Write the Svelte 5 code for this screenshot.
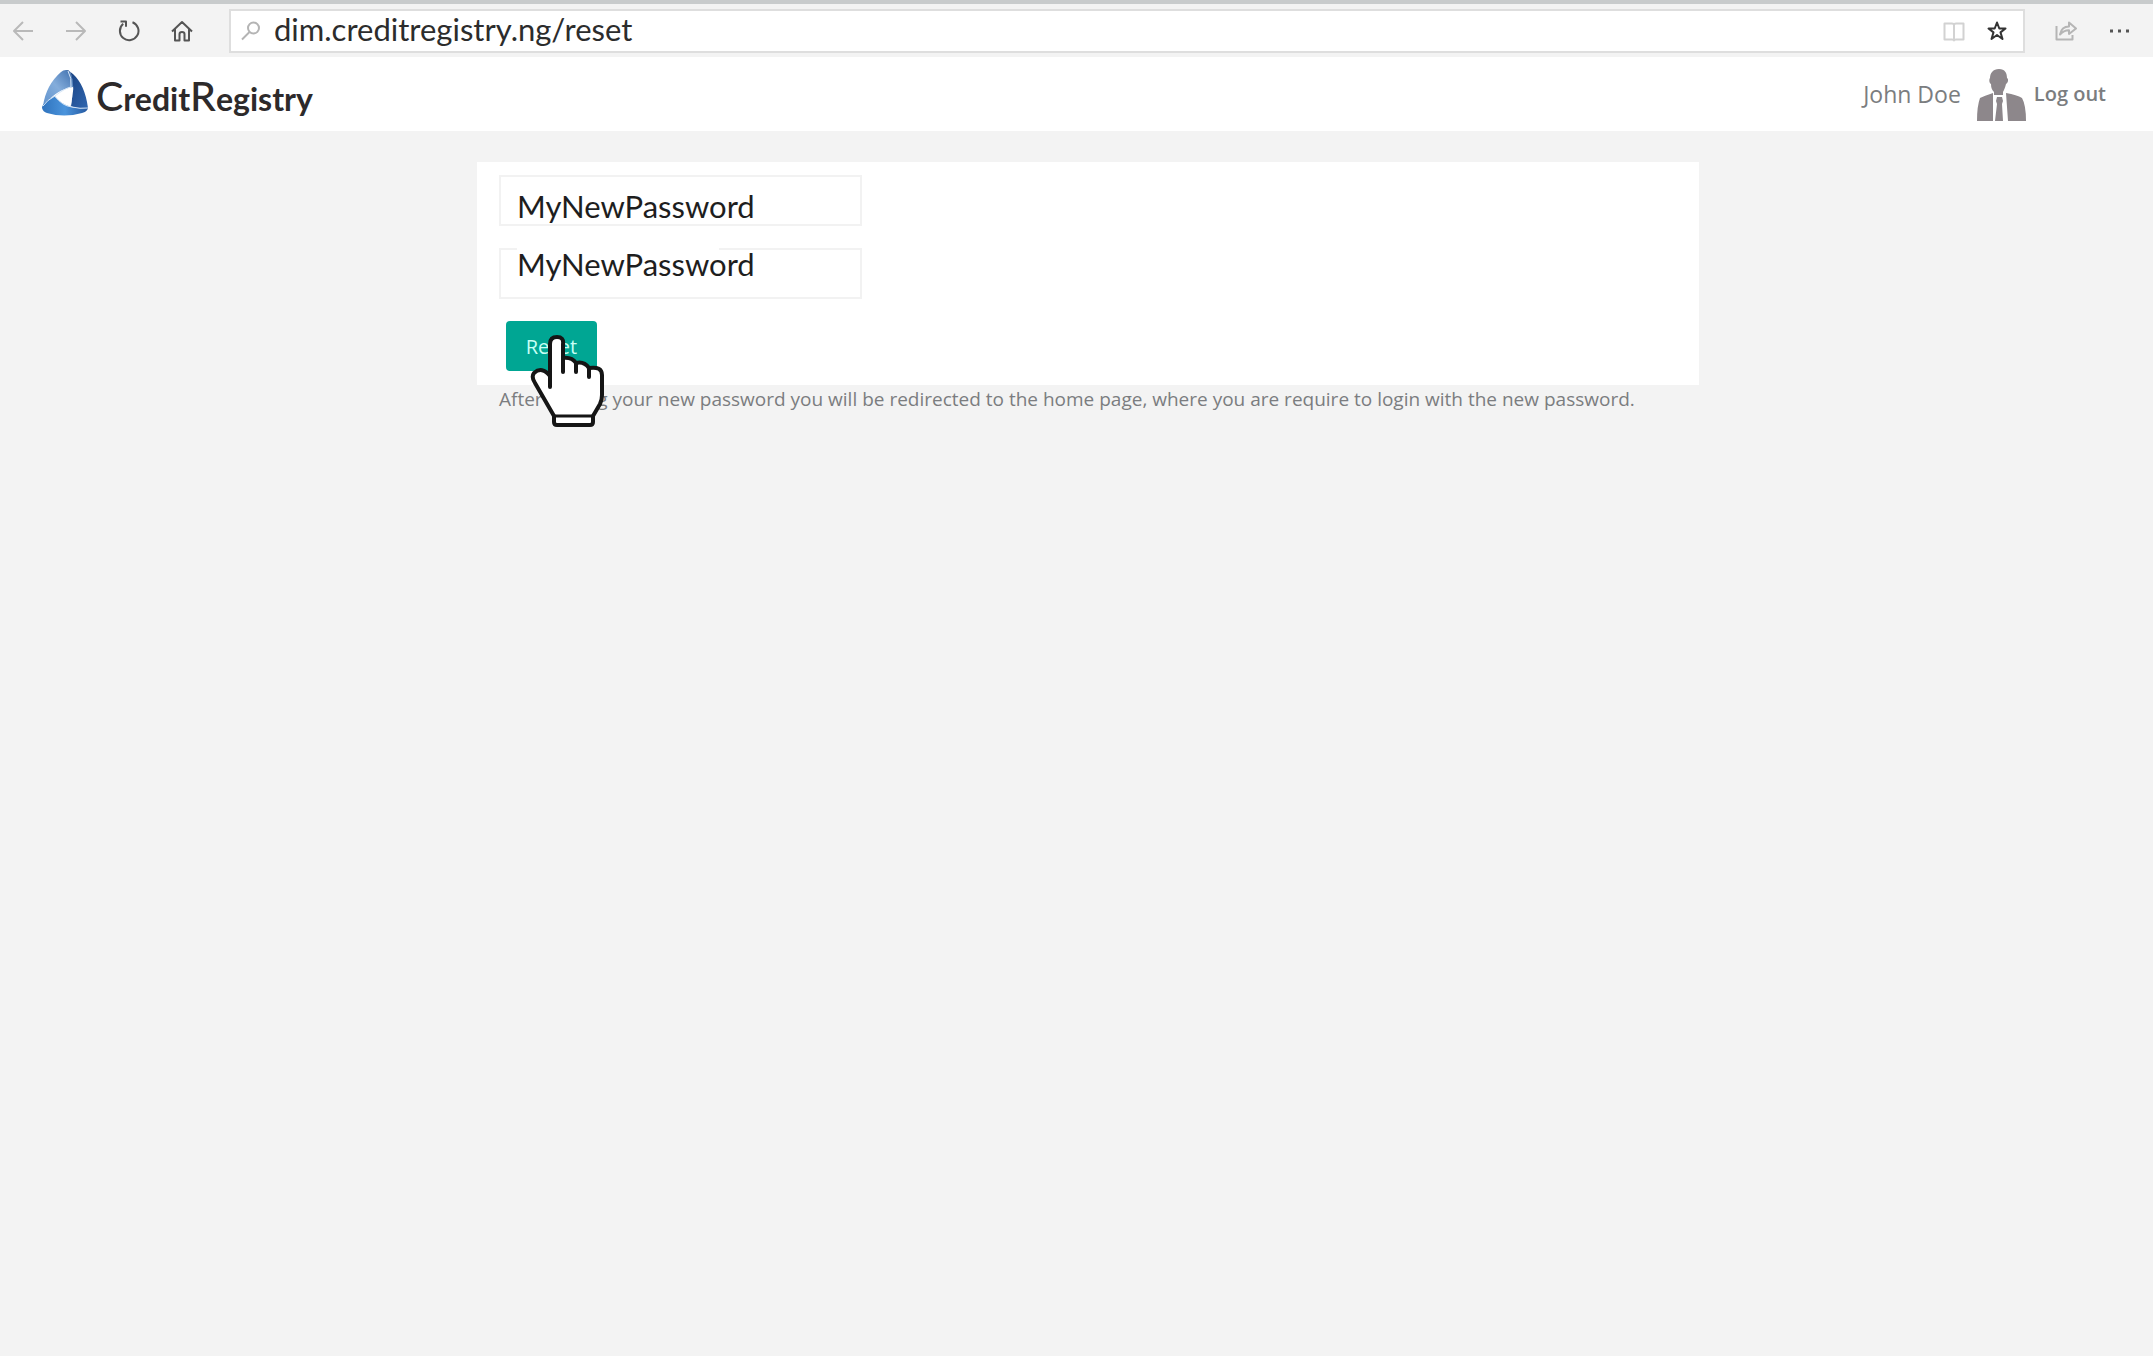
<script>
  let address = $state('dim.creditregistry.ng/reset');
  let password = $state('MyNewPassword');
  let confirmation = $state('MyNewPassword');
</script>

<div class="page">
  <nav class="toolbar" aria-label="Browser">
    <div class="nav-buttons">
      <button class="tool faint" aria-label="Back">
        <svg viewBox="0 0 22 22"><path d="M21 11H2M11 2L2 11l9 9" /></svg>
      </button>
      <button class="tool faint" aria-label="Forward">
        <svg viewBox="0 0 22 22"><path d="M1 11h19M11 2l9 9-9 9" /></svg>
      </button>
      <button class="tool dark" aria-label="Refresh">
        <svg viewBox="0 0 22 22"><path d="M14.5 2.2A9.3 9.3 0 1 1 5.2 3.8M2.5 1.6H8v5.2" /></svg>
      </button>
      <button class="tool dark" aria-label="Home">
        <svg viewBox="0 0 22 22"><path d="M1 11.5L11 2l10 9.500M4 9v11.500h4.500v-6.500q0-2 2.500-2t2.500 2v6.500H18V9" /></svg>
      </button>
    </div>
    <div class="address">
      <svg class="search" viewBox="0 0 20 20"><circle cx="12.500" cy="7" r="5.500" /><path d="M8.500 11L1 18.500" /></svg>
      <input type="text" aria-label="Address" spellcheck="false" bind:value={address} />
      <button class="tool pale" aria-label="Reading view">
        <svg viewBox="0 0 22 22"><path d="M1.500 3.500H9q2 0 2 1.500 0-1.500 2-1.500h7.500v16H13q-2 0-2 1 0-1-2-1H1.500zM11 5v15" /></svg>
      </button>
      <button class="tool star" aria-label="Add to favourites">
        <svg viewBox="0 0 22 22"><path d="M11 2.500l2.300 6h6.200l-5 3.900 2 6.600-5.500-4-5.500 4 2-6.600-5-3.900h6.200z" /></svg>
      </button>
    </div>
    <div class="actions">
      <button class="tool share" aria-label="Share">
        <svg viewBox="0 0 22 22"><path d="M1.500 6v13.500h16V15M5 14.500Q6.500 6.500 14 6.500V2.500l7 6-7 5.500v-3.800Q9 10 5 14.500z" /></svg>
      </button>
      <button class="tool dots" aria-label="More">
        <svg viewBox="0 0 22 22"><rect x="1" y="9.500" width="3" height="3" /><rect x="9" y="9.500" width="3" height="3" /><rect x="17" y="9.500" width="3" height="3" /></svg>
      </button>
    </div>
  </nav>

  <header class="site-header">
    <a class="brand" href="/" aria-label="CreditRegistry">
      <svg class="mark" viewBox="0 0 48 48">
        <defs>
          <linearGradient id="left" x1="0" y1="1" x2="1" y2="0"><stop offset="0" stop-color="#5f92cd" /><stop offset="0.500" stop-color="#84addb" /><stop offset="1" stop-color="#3d6ead" /></linearGradient>
          <linearGradient id="right" x1="0" y1="0" x2="1" y2="1"><stop offset="0" stop-color="#163e7d" /><stop offset="1" stop-color="#3167b0" /></linearGradient>
          <linearGradient id="base" x1="0" y1="0" x2="1" y2="0"><stop offset="0" stop-color="#2f73bd" /><stop offset="0.500" stop-color="#4b94dc" /><stop offset="1" stop-color="#2458a0" /></linearGradient>
        </defs>
        <path fill="url(#left)" d="M25 1Q29 1 30 5q3 7 2 13Q16 20 2 37 5 16 20 3q2-2 5-2z" />
        <path fill="url(#right)" d="M25 1q4 1 7 4 12 11 15 34 0 2-3 1-8 0-15-3 6-18 1-32-1-4-5-4z" />
        <path fill="url(#base)" d="M1 39q0-3 4-6 4-4 9-6 6 8 16 11 8 2 17 1-1 4-6 5-18 5-35 0-4-1-5-5z" />
        <path fill="#fff" d="M14 28q7-6 16-9 2 9 0 18-9-2-16-9z" />
        <path class="seam" d="M2 37q4-6 12-10 10-8 16-9 1-9-3-16M14 27q7 10 17 11 8 2 16 1" />
      </svg>
      <span class="wordmark"><span class="cap">C</span>redit<span class="cap">R</span>egistry</span>
    </a>
    <div class="account">
      <span>John Doe</span>
      <svg class="avatar" viewBox="0 0 49 53">
        <path d="M22 1c6 0 8 4 8 9 2 1 1 5-1 6-1 4-2 6-3 8v3h-9v-3c-2-2-3-4-3-8-2-1-2-5-1-6 0-5 3-9 9-9z" />
        <path d="M16 25v28H0q0-15 3-23 4-2 13-5zM29 25q11 2 16 5 4 7 4 23H31zM20 29h5l1 4-1 3 1 17h-8l2-17-1-3z" />
      </svg>
      <a class="logout" href="/logout">Log out</a>
    </div>
  </header>

  <main>
    <form class="panel" onsubmit={(event) => event.preventDefault()}>
      <input class="field" type="text" aria-label="New password" spellcheck="false" bind:value={password} />
      <div class="confirm">
        <input class="field raised" type="text" aria-label="Confirm new password" spellcheck="false" bind:value={confirmation} />
      </div>
      <div class="submit">
        <button class="reset" type="submit">Reset</button>
        <svg class="pointer" viewBox="0 0 75 92">
          <path d="M20 50V9Q20 2 27 2t6 7v14q9-1 13 5 8-2 13 5 13-2 13 7v20q0 5-2 9l-7 12v6q0 3-3 3H27q-3 0-3-3v-6L5 48Q1 42 4 38q8-7 16 3z" />
          <path d="M20 38v14M33 23v14M46 28v9M59 33v9" />
          <path class="cuff" d="M25 81h37" />
        </svg>
      </div>
    </form>
    <p class="note">After setting your new password you will be redirected to the home page, where you are require to login with the new password.</p>
  </main>
</div>

<style>
  :global(body) {
    background: #f3f3f3;
  }
  .page {
    min-height: 100vh;
    background: #f3f3f3;
    font-family: "Open Sans", "Noto Sans", sans-serif;
    color: #7b7d80;
  }
  button, input {
    box-sizing: border-box;
    margin: 0;
    padding: 0;
    border: 0;
    background: none;
    font: inherit;
    outline: none;
  }
  .toolbar {
    display: flex;
    align-items: center;
    box-sizing: border-box;
    height: 57px;
    border-top: 4px solid #c8cbcc;
    padding: 0 22px 0 12px;
  }
  .nav-buttons {
    display: flex;
    gap: 31px;
    width: 217px;
  }
  .tool {
    display: block;
    flex: none;
    width: 22px;
    height: 22px;
  }
  .tool svg {
    display: block;
    width: 22px;
    height: 22px;
  }
  svg path, svg circle {
    stroke-linejoin: round;
  }
  .tool svg, .search {
    fill: none;
    stroke: currentColor;
    stroke-width: 2;
  }
  .faint { color: #b9b9b9; }
  .dark { color: #555; }
  .pale { color: #d2d2d2; }
  .star { color: #333; }
  .share { color: #b5b5b5; }
  .tool.dots svg {
    fill: #555;
    stroke: none;
  }
  .address {
    display: flex;
    flex: 1;
    align-items: center;
    box-sizing: border-box;
    height: 44px;
    border: 2px solid #dedede;
    padding: 0 15px 0 10px;
    background: #fff;
  }
  .search {
    flex: none;
    width: 20px;
    height: 20px;
    margin-right: 13px;
    color: #b4b4b4;
  }
  .address input {
    flex: 1;
    min-width: 0;
    height: 40px;
    padding-bottom: 4px;
    font-family: Lato, sans-serif;
    font-size: 31px;
    color: #2c2c2c;
  }
  .address .star {
    margin-left: 21px;
  }
  .actions {
    display: flex;
    gap: 32px;
    margin-left: 30px;
  }
  .site-header {
    display: flex;
    align-items: center;
    justify-content: space-between;
    box-sizing: border-box;
    height: 74px;
    padding: 0 47px 0 41px;
    background: #fff;
  }
  .brand {
    display: flex;
    align-items: center;
    gap: 7px;
    color: #2d2a2b;
    text-decoration: none;
  }
  .mark {
    width: 48px;
    height: 48px;
    margin-bottom: 2px;
  }
  .seam {
    fill: none;
    stroke: #d6e6f7;
    stroke-width: 1;
  }
  .wordmark {
    padding-top: 6px;
    font-family: Lato, sans-serif;
    font-size: 32px;
    font-weight: 700;
    line-height: 48px;
  }
  .cap {
    font-size: 41px;
    font-weight: 500;
  }
  .account {
    display: flex;
    align-items: center;
    font-size: 23px;
    line-height: 30px;
  }
  .avatar {
    width: 49px;
    height: 53px;
    margin: 0 8px 0 16px;
    fill: #8d878b;
  }
  .logout {
    font-weight: 600;
    font-size: 20px;
    color: #7b7d80;
    text-decoration: none;
  }
  main {
    max-width: 1222px;
    margin: 0 auto;
    padding: 31px 0 0 23px;
  }
  .panel {
    display: flex;
    flex-direction: column;
    align-items: flex-start;
    gap: 22px;
    padding: 13px 22px 14px;
    background: #fff;
  }
  .field {
    display: block;
    width: 363px;
    height: 51px;
    border: 2px solid #f2f2f2;
    padding: 11px 16px 0;
    background: #fff;
    font-family: Lato, sans-serif;
    font-size: 31px;
    line-height: 36px;
    color: #1e1e1e;
  }
  .field.raised {
    padding: 0 16px 20px;
  }
  .confirm {
    position: relative;
  }
  .confirm::before {
    content: "";
    position: absolute;
    top: 0;
    left: 18px;
    width: 202px;
    height: 2px;
    background: #fff;
  }
  .submit {
    position: relative;
    padding-left: 7px;
  }
  .reset {
    display: block;
    width: 91px;
    height: 50px;
    border-radius: 4px;
    background: #00a693;
    font-size: 20px;
    color: #c8fff5;
  }
  .pointer {
    position: absolute;
    top: 14px;
    left: 31px;
    width: 75px;
    height: 92px;
    fill: #fff;
    stroke: #151515;
    stroke-width: 4;
    stroke-linecap: round;
  }
  .cuff {
    stroke-width: 3;
  }
  .note {
    margin: 0;
    padding: 0 22px;
    font-size: 19px;
    line-height: 28px;
  }
</style>
